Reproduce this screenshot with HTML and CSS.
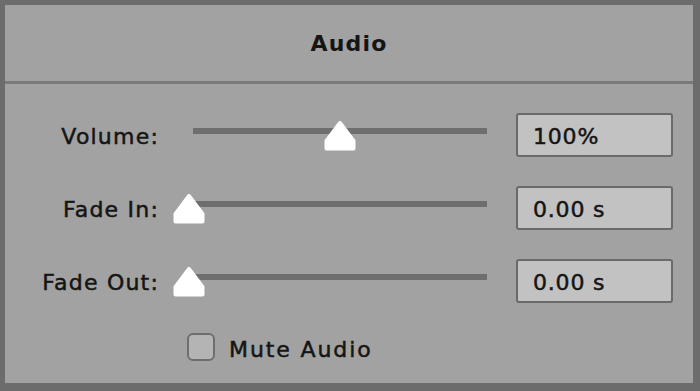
FILE: index.html
```html
<!DOCTYPE html>
<html>
<head>
  <title>Audio</title>
  <link rel="stylesheet" href="styles.css">
</head>
<body>
  <div class="panel">
    <div class="panel-header">Audio</div>
    <div class="panel-body">
      <!-- one row per setting: label, slider, value box -->
      <div class="row">
        <div class="label">Volume:</div>
        <div class="slider">
          <div class="track"></div>
          <svg class="thumb" style="--pos: 0.535" viewBox="0 0 32 30" width="32" height="30">
            <path d="M16 2 L29.5 20 L29.5 27.5 L2.5 27.5 L2.5 20 Z" />
          </svg>
        </div>
        <div class="value">100%</div>
      </div>
      <div class="row">
        <div class="label">Fade In:</div>
        <div class="slider">
          <div class="track"></div>
          <svg class="thumb" style="--pos: 0" viewBox="0 0 32 30" width="32" height="30">
            <path d="M16 2 L29.5 20 L29.5 27.5 L2.5 27.5 L2.5 20 Z" />
          </svg>
        </div>
        <div class="value">0.00 s</div>
      </div>
      <div class="row">
        <div class="label">Fade Out:</div>
        <div class="slider">
          <div class="track"></div>
          <svg class="thumb" style="--pos: 0" viewBox="0 0 32 30" width="32" height="30">
            <path d="M16 2 L29.5 20 L29.5 27.5 L2.5 27.5 L2.5 20 Z" />
          </svg>
        </div>
        <div class="value">0.00 s</div>
      </div>
      <label class="check-row">
        <span class="checkbox"></span>
        <span class="check-label">Mute Audio</span>
      </label>
    </div>
  </div>
</body>
</html>
```

FILE: styles.css
```css
body {
  margin: 0;
  background: #6c6c6c;
  font-family: "DejaVu Sans", sans-serif;
  color: #151515;
}

.panel {
  margin: 5px;
  width: 688px;
  height: 378px;
  background: #a2a2a2;
  box-sizing: border-box;
}

.panel-header {
  height: 79px;
  border-bottom: 3px solid #7a7a7a;
  display: flex;
  align-items: center;
  justify-content: center;
  font-weight: bold;
  font-size: 22px;
  letter-spacing: 1.2px;
  box-sizing: border-box;
}

.panel-body {
  padding-top: 29px;
}

.row {
  display: grid;
  grid-template-columns: 153px 314px 171px;
  column-gap: 15px;
  height: 44px;
  margin-bottom: 29px;
  align-items: center;
}

.label {
  text-align: right;
  font-size: 22px;
  letter-spacing: 1.2px;
  margin-right: -1px;
  padding-top: 3px;
  -webkit-text-stroke: 0.5px #151515;
}

.slider {
  position: relative;
  height: 44px;
}

.track {
  position: absolute;
  left: 20px;
  right: 0;
  top: 15px;
  height: 6px;
  background: #6e6e6e;
}

.thumb {
  position: absolute;
  top: 8px;
  left: calc(var(--pos) * (100% - 32px));
}

.thumb path {
  fill: #ffffff;
  stroke: #ffffff;
  stroke-width: 4;
  stroke-linejoin: round;
}

.value {
  margin-left: 14px;
  height: 44px;
  box-sizing: border-box;
  border: 2px solid #6a6a6a;
  border-radius: 3px;
  background: #c2c2c2;
  font-size: 22px;
  letter-spacing: 0.8px;
  padding-left: 15px;
  padding-top: 3px;
  display: flex;
  align-items: center;
  -webkit-text-stroke: 0.5px #151515;
}

.check-row {
  display: flex;
  align-items: center;
  padding-left: 182px;
  height: 29px;
}

.checkbox {
  width: 28px;
  height: 28px;
  box-sizing: border-box;
  border: 2px solid #6e6e6e;
  border-radius: 6px;
  background: #b4b4b4;
}

.check-label {
  margin-left: 14px;
  font-size: 22px;
  letter-spacing: 1.9px;
  padding-top: 5px;
  -webkit-text-stroke: 0.5px #151515;
}
```
